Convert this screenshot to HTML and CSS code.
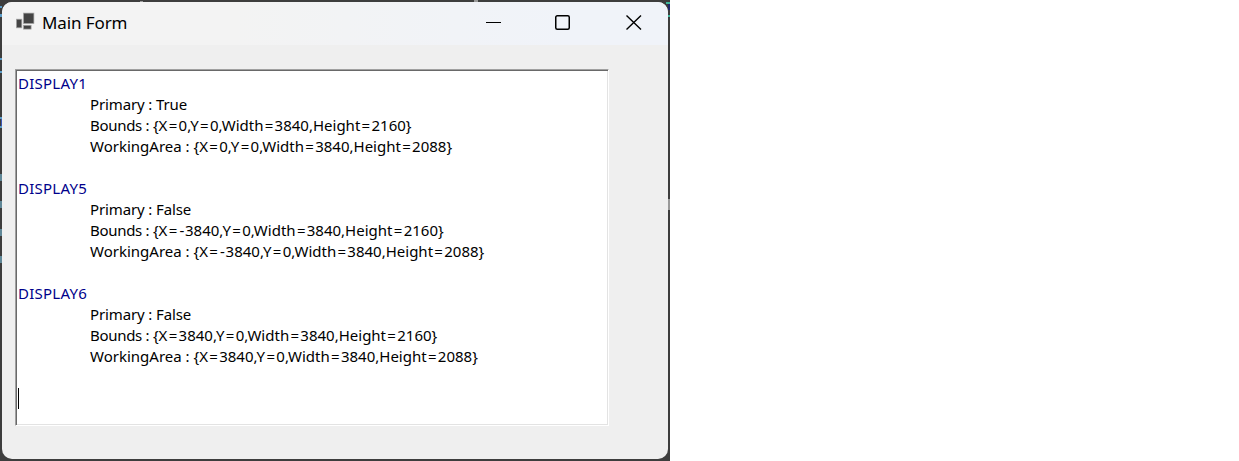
FILE: index.html
```
<!DOCTYPE html>
<html lang="en">
<head>
<meta charset="utf-8">
<title>Main Form</title>
<link rel="stylesheet" href="styles.css">
</head>
<body>
<div class="desktop">
  <svg class="backdrop" width="670" height="461" viewBox="0 0 670 461">
    <g fill="#5c9dc8">
      <rect x="0" y="6" width="2" height="2"/><rect x="0" y="14" width="2" height="3"/>
      <rect x="0" y="58" width="2" height="2"/><rect x="0" y="71" width="2" height="2"/>
      <rect x="0" y="117" width="2" height="2"/><rect x="0" y="126" width="2" height="2"/>
    </g>
    <rect x="1" y="119" width="1" height="7" fill="#3c58b8"/>
    <g fill="#5f8797">
      <rect x="0" y="174" width="2" height="7"/><rect x="0" y="201" width="2" height="7"/>
      <rect x="0" y="229" width="2" height="7"/><rect x="0" y="256" width="2" height="7"/>
    </g>
    <g fill="#999"><rect x="140" y="1" width="3" height="1"/><rect x="474" y="0" width="4" height="2"/>
    <rect x="668" y="199" width="2" height="11"/></g>
    <g fill="#3fb59c"><rect x="666" y="2" width="4" height="2"/><rect x="668" y="15" width="2" height="2"/></g>
    <rect x="668" y="4" width="2" height="6" fill="#23286a"/>
  </svg>
  <main class="window">
    <header class="titlebar">
      <svg class="app-icon" width="20" height="18" viewBox="0 0 20 18">
        <g fill="#444" stroke="#a4a4a4" stroke-width="0.7">
          <rect x="8.5" y="1.1" width="10.4" height="10.4"/>
          <rect x="1.4" y="7.2" width="5.4" height="8.6"/>
          <rect x="8.5" y="13.3" width="7.6" height="3.8"/>
        </g>
      </svg>
      <h1 class="title">Main Form</h1>
      <div class="controls">
        <svg width="16" height="16" viewBox="0 0 16 16"><path d="M1 8.5H16" stroke="#000" fill="none"/></svg>
        <svg width="16" height="16" viewBox="0 0 16 16"><rect x="0.75" y="1.75" width="13.5" height="13.5" rx="1.5" stroke="#000" stroke-width="1.5" fill="none"/></svg>
        <svg width="16" height="16" viewBox="0 0 16 16"><path d="M.5 1.5 15 15.5M15 1.5.5 15.5" stroke="#000" stroke-width="1.4" fill="none"/></svg>
      </div>
    </header>
    <section class="textbox">
      <p class="name">DISPLAY1</p>
      <p class="detail primary">Primary : True</p>
      <p class="detail">Bounds : <span class="value">{X<i>=</i>0,Y<i>=</i>0,Width<i>=</i>3840,Height<i>=</i>2160}</span></p>
      <p class="detail area">WorkingArea : <span class="value">{X<i>=</i>0,Y<i>=</i>0,Width<i>=</i>3840,Height<i>=</i>2088}</span></p>
      <p class="gap"></p>
      <p class="name">DISPLAY5</p>
      <p class="detail primary">Primary : False</p>
      <p class="detail">Bounds : <span class="value">{X<i>=</i><i class="minus">-</i>3840,Y<i>=</i>0,Width<i>=</i>3840,Height<i>=</i>2160}</span></p>
      <p class="detail area">WorkingArea : <span class="value">{X<i>=</i><i class="minus">-</i>3840,Y<i>=</i>0,Width<i>=</i>3840,Height<i>=</i>2088}</span></p>
      <p class="gap"></p>
      <p class="name">DISPLAY6</p>
      <p class="detail primary">Primary : False</p>
      <p class="detail">Bounds : <span class="value">{X<i>=</i>3840,Y<i>=</i>0,Width<i>=</i>3840,Height<i>=</i>2160}</span></p>
      <p class="detail area">WorkingArea : <span class="value">{X<i>=</i>3840,Y<i>=</i>0,Width<i>=</i>3840,Height<i>=</i>2088}</span></p>
      <p class="gap"></p>
      <p class="caret"></p>
    </section>
  </main>
</div>
</body>
</html>
```
FILE: styles.css
```
* { box-sizing: border-box; }
body { margin: 0; background: #fff; font-family: "Noto Sans", "Open Sans", sans-serif; }
.desktop {
  position: relative;
  width: 670px;
  height: 461px;
  padding: 2px;
  background: #3d3d3d;
  overflow: hidden;
}
.backdrop { position: absolute; left: 0; top: 0; }
.window {
  position: relative;
  width: 666px;
  height: 457px;
  border-radius: 10px;
  background: #efefef;
  overflow: hidden;
}
.titlebar {
  display: flex;
  height: 43px;
  padding-left: 13px;
  background: linear-gradient(90deg, #f3f3f3 35%, #f0f3f9 85%);
}
.app-icon { margin-top: 10px; }
.title {
  margin: 0 0 0 7px;
  font-size: 17px;
  font-weight: 400;
  line-height: 41px;
  letter-spacing: -0.1px;
  white-space: nowrap;
}
.controls {
  display: flex;
  gap: 54px;
  margin: 12px 26px 0 auto;
}
.controls svg:last-child { margin-left: 1px; }
.textbox {
  width: 594px;
  height: 357px;
  margin: 24px 0 0 13px;
  padding: 3px 0 0 2px;
  border: 1px solid;
  border-color: #a0a0a0 #fff #fff #a0a0a0;
  background: #fff;
  box-shadow: inset 1px 1px #696969, inset -1px -1px #e3e3e3;
}
.textbox p { height: 21px; margin: 0; font-size: 15px; line-height: 21px; white-space: nowrap; }
.textbox .name { color: #00008b; letter-spacing: 0.25px; }
.textbox .detail { padding-left: 72px; letter-spacing: -0.3px; }
.textbox .primary { letter-spacing: -0.12px; }
.textbox .area { letter-spacing: 0; }
.value { letter-spacing: 0; }
.value i { margin: 0 1.3px; font-style: normal; }
.value .minus { margin: 0 0.8px; }
.textbox .caret { width: 1px; background: #000; }
```
